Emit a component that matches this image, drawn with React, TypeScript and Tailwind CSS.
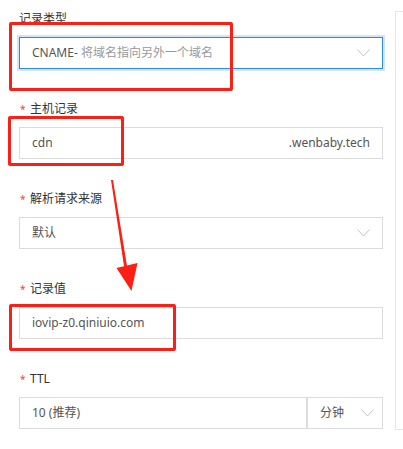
import React from "react";

const Chevron = () => (
  <svg width="13" height="8" viewBox="0 0 13 8" fill="none" className="shrink-0">
    <path d="M0.5 0.5L6.5 7L12.5 0.5" stroke="#c4c4c4" strokeWidth="1" />
  </svg>
);

const Label = ({ text, required = true }: { text: string; required?: boolean }) => (
  <div className="flex items-center h-5 mb-2 text-[12px] text-[#333]">
    {required && <span className="text-[#e5483b] text-[10px] w-[10px] ml-[1px] leading-none">*</span>}
    <span>{text}</span>
  </div>
);

const App: React.FC = () => {
  return (
    <div
      className="relative w-[403px] h-[449px] bg-white overflow-hidden"
      style={{ fontFamily: '"Noto Sans", "Noto Sans CJK SC", sans-serif' }}
    >
      <div className="flex h-full">
        <div className="w-[364px] ml-[19px] pt-[9px]">
          <div className="mb-[30px]">
            <Label text="记录类型" required={false} />
            <div className="h-8 flex items-center justify-between px-3 border border-[#2b8ae2] ring-[2px] ring-[#d4e3f6] text-[12px]">
              <span className="text-[#555]">
                CNAME- <span className="text-[#999]">将域名指向另外一个域名</span>
              </span>
              <Chevron />
            </div>
          </div>

          <div className="mb-[30px]">
            <Label text="主机记录" />
            <div className="h-8 flex items-center justify-between px-3 border border-[#dcdcdc] text-[12px] text-[#555]">
              <span>cdn</span>
              <span>.wenbaby.tech</span>
            </div>
          </div>

          <div className="mb-[30px]">
            <Label text="解析请求来源" />
            <div className="h-8 flex items-center justify-between px-3 border border-[#dcdcdc] text-[12px] text-[#555]">
              <span>默认</span>
              <Chevron />
            </div>
          </div>

          <div className="mb-[30px]">
            <Label text="记录值" />
            <div className="h-8 flex items-center px-3 border border-[#dcdcdc] text-[12px] text-[#555]">
              <span>iovip-z0.qiniuio.com</span>
            </div>
          </div>

          <div>
            <Label text="TTL" />
            <div className="h-8 flex border border-[#dcdcdc] text-[12px] text-[#555]">
              <div className="flex-1 flex items-center px-3">10 (推荐)</div>
              <div className="w-[76px] border-l-2 border-[#dcdcdc] flex items-center justify-between pl-3 pr-2">
                <span>分钟</span>
                <Chevron />
              </div>
            </div>
          </div>
        </div>

        <div className="ml-[12px] mt-[11px] h-[419px] flex-1 border-l border-t border-b border-[#e6e6e6]" />
      </div>

      {/* annotations */}
      <div className="absolute left-[9px] top-[22px] w-[224px] h-[69px] border-[3px] border-[#fa2016] rounded-[2px]" />
      <div className="absolute left-[8px] top-[116px] w-[116px] h-[50px] border-[3px] border-[#fa2016] rounded-[2px]" />
      <div className="absolute left-[9px] top-[304px] w-[167px] h-[47px] border-[3px] border-[#fa2016] rounded-[2px]" />
      <svg className="absolute left-0 top-0" width="403" height="449" viewBox="0 0 403 449">
        <path d="M111 180 L113 180 L127 266 L124 266 Z" fill="#fa2016" />
        <path d="M116.5 268 L137.5 263 L131.5 291 Z" fill="#fa2016" />
      </svg>
    </div>
  );
};

export default App;
